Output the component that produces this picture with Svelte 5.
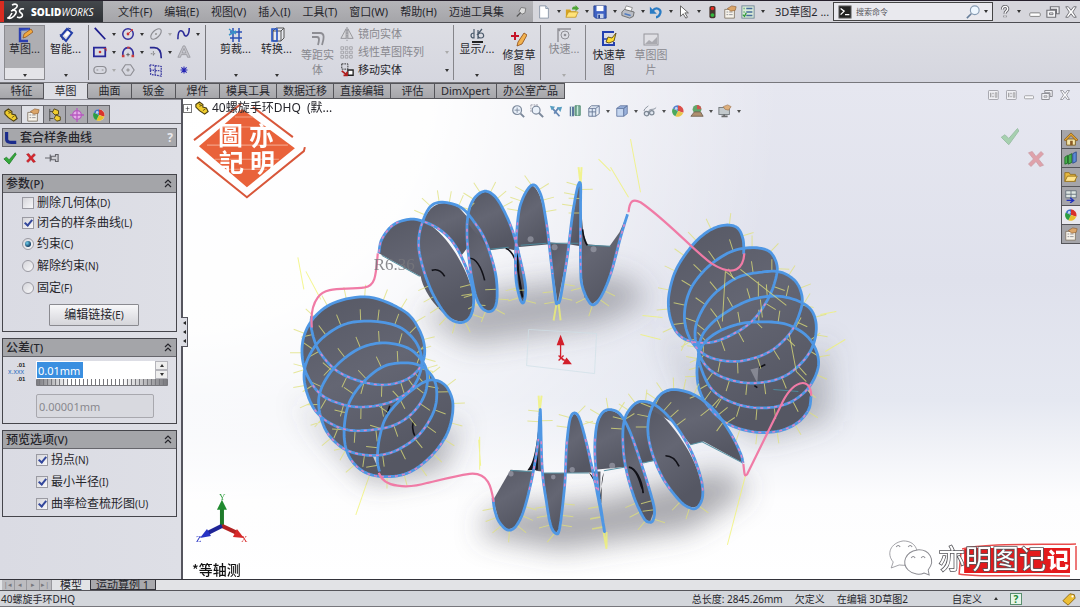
<script>
  const menus = ['文件(F)', '编辑(E)', '视图(V)', '插入(I)', '工具(T)', '窗口(W)', '帮助(H)', '迈迪工具集'];
  const tabs = ['特征', '草图', '曲面', '钣金', '焊件', '模具工具', '数据迁移', '直接编辑', '评估', 'DimXpert', '办公室产品'];
  const quick = [
    ['new', '新建', 1], ['open', '打开', 1], ['save', '保存', 1], ['print', '打印', 1], ['undo', '撤销', 1],
    ['cursor', '选择', 1], ['light', '重建', 0], ['props', '属性', 0], ['list', '选项', 1]
  ];
  const tools = [
    ['line', '直线', 1], ['circle', '圆', 1], ['ellipse', '椭圆', 2], ['spline', '样条曲线', 1],
    ['rect', '矩形', 1], ['arc', '圆弧', 1], ['fillet', '圆角', 1], ['text', '文字', 0],
    ['slot', '槽口', 2], ['poly', '多边形', 0], ['plane', '基准面', 0], ['point', '点', 0]
  ];
  const heads = [
    ['zoomfit', '整屏显示', 0], ['zoomarea', '局部放大', 0], ['prev', '上一视图', 0], ['section', '剖面视图', 0],
    ['orient', '视图定向', 1], ['cube', '显示样式', 1], ['glasses', '隐藏/显示', 1],
    ['ball', '外观', 0], ['scene', '布景', 1], ['monitor', '视图设定', 1]
  ];
  const side = [['home', '资源'], ['library', '设计库'], ['folder', '文件探索器'], ['palette', '视图调色板'], ['ball', '外观'], ['props', '自定义属性']];
  const managers = [['part', '设计树'], ['props', '属性'], ['config', '配置'], ['target', '尺寸'], ['ball', '显示']];

  const icons = {
    new: '<path d="M3 1h7l3 3v11H3z" fill="#fff" stroke="#8793a5"/><path d="M10 1v3h3" fill="#cbd7e8" stroke="#8793a5"/>',
    open: '<path d="M1 5h5l1 2h6v7H1z" fill="#d6a321"/><path d="M1 14l3-6h11l-3 6z" fill="#ffe37a" stroke="#b88a1c" stroke-width=".7"/><path d="M8 5c0-3 2-4 4-3V0l4 4-4 3V5z" fill="#4ea535"/>',
    save: '<path d="M1 1h14v14H3l-2-2z" fill="#3f62c4" stroke="#25408c"/><path d="M4 1h8v6H4z" fill="#fff"/><path d="M5 10h7v5H5z" fill="#c9d4ea"/><path d="M6 11h2v4H6z" fill="#25408c"/>',
    print: '<path d="M4 6l2-5 7 2-2 5z" fill="#fff" stroke="#888"/><path d="M1 8l3-3 11 3-1 5-4 2-9-3z" fill="#b9bcc4" stroke="#666"/><path d="M4 10l7 2" stroke="#507bc0" stroke-width="1.5"/>',
    undo: '<path d="M4 7c4-6 10-2 9 2-1 3-3 5-5 5" fill="none" stroke="#2b7cc4" stroke-width="2.6"/><path d="M1 2v8h8z" fill="#2b7cc4"/>',
    cursor: '<path d="M4 1v12l3-3 3 5 2-1-3-5h4z" fill="#fff" stroke="#555"/>',
    light: '<rect x="5" y="1" width="7" height="14" rx="2" fill="#45362f"/><circle cx="8.500" cy="4" r="2" fill="#e22b22"/><circle cx="8.500" cy="11.500" r="2.200" fill="#35b93f"/>',
    props: '<path d="M2 5h11v10H2z" fill="#f7f3ea" stroke="#847869"/><path d="M4 8h2M4 11h2M7 8h4M7 11h4" stroke="#8a8a90"/><path d="M5 4l5-3 5 1-1 4-5 1z" fill="#dba568" stroke="#8d5c2e" stroke-width=".7"/>',
    list: '<rect x="1" y="1" width="14" height="14" fill="#d9ead8" stroke="#6d8495"/><path d="M6 4h7M6 8h7M6 12h7" stroke="#456c9b" stroke-width="1.500"/><path d="M3 4h1M3 8h1M2 11l2 2 2-4" stroke="#2e9a3a" fill="none" stroke-width="1.500"/>',
    sketch: '<path d="M13 2H3v12h8" fill="none" stroke="#2c3fb0" stroke-width="2.400"/><path d="M3 5c2-3 5-1 9-3" fill="none" stroke="#4464cf"/><path d="M6 11l1-4 7-5 2 3-7 5z" fill="#f2a93d" stroke="#8a4c1b" stroke-width=".7"/>',
    dimension: '<path d="M3 9l6-7 5 4-6 8z" fill="none" stroke="#243fa8" stroke-width="2"/><path d="M6 8l4-4 2 2-4 4z" fill="#fff"/><path d="M2 7l3 6M10 1l3 1" stroke="#2b3f93"/>',
    line: '<path d="M2 1l12 13" stroke="#1d1d8e" stroke-width="2"/>',
    circle: '<circle cx="8" cy="8" r="6" fill="none" stroke="#33309c" stroke-width="1.700"/><path d="M8 8l4-4" stroke="#c33"/><circle cx="8" cy="8" r="1.600" fill="#c33"/><circle cx="12.500" cy="3.500" r="1.200" fill="#c33"/>',
    ellipse: '<ellipse cx="8" cy="8" rx="7.500" ry="4" transform="rotate(-45 8 8)" fill="none" stroke="#8d8d93" stroke-width="1.300"/><circle cx="8" cy="8" r="1.200" fill="#999"/>',
    spline: '<path d="M1 14C1 0 7 4 8 8s6 3 6-7" fill="none" stroke="#2a2a98" stroke-width="1.800"/>',
    rect: '<rect x="1" y="3" width="13" height="10" fill="none" stroke="#28289a" stroke-width="2"/><circle cx="8" cy="8" r="1.500" fill="#c33"/><path d="M12 4h3v3" stroke="#c33" fill="none"/>',
    arc: '<path d="M2 12C1 0 15 0 14 12" fill="none" stroke="#33309c" stroke-width="1.800"/><path d="M8 9v4M6 11h4" stroke="#555"/><path d="M1 11h3v3H1zM12 11h3v3h-3zM7 2h3v2H7z" fill="#cc3c3c"/>',
    fillet: '<path d="M1 3h5c5 0 8 3 8 12" fill="none" stroke="#26268f" stroke-width="1.900"/><path d="M5 7v6M2 10h6" stroke="#777" stroke-dasharray="2 1"/>',
    text: '<path d="M1 14L7 1h2l6 13h-3l-1-3H5l-1 3zM6 9h4L8 4z" fill="#c3c3c9" stroke="#8f8f96" stroke-width=".8"/>',
    slot: '<rect x="1" y="4" width="14" height="8" rx="4" fill="none" stroke="#8d8d93" stroke-width="1.400"/><path d="M4 8h2M10 8h2" stroke="#888"/>',
    poly: '<path d="M5 2h6l4 6-4 6H5L1 8z" fill="none" stroke="#8d8d93" stroke-width="1.300"/><path d="M8 6v4M6 8h4" stroke="#888"/>',
    plane: '<path d="M1 2l13 2v11L2 13zM1 8l13 1M7 3v11" fill="none" stroke="#3a3aa0" stroke-width="1.400" stroke-dasharray="2 1"/>',
    point: '<path d="M8 4v8M4 8h8M5 5l6 6M11 5l-6 6" stroke="#2525b4" stroke-width="1.200"/>',
    trim: '<path d="M2 5h12M2 11h12M5 1v14M11 1v14" stroke="#2b50b6" stroke-width="1.500"/><path d="M1 2l7 5M1 8l7-4" stroke="#3794c8" stroke-width="1.500"/>',
    convert: '<path d="M4 4l3-3h8v10l-3 3H4z" fill="#e8eaf0" stroke="#555"/><path d="M4 4h8v10M12 4l3-3" fill="none" stroke="#555"/><path d="M3 2h5v12H3z" fill="none" stroke="#2554c4" stroke-width="1.600"/>',
    offset: '<path d="M2 2h8c5 0 4 6 2 12M2 6h5c3 0 2 4 1 8" fill="none" stroke="#8d8d93" stroke-width="1.800"/>',
    mirror: '<path d="M7 2L1 13h6zM9 2l6 11H9z" fill="#d8d8dc" stroke="#909095"/><path d="M8 0v16" stroke="#88888e" stroke-dasharray="2 1"/>',
    pattern: '<path d="M1 2h3v3H1zM6 2h3v3H6zM11 2h3v3h-3zM1 7h3v3H1zM6 7h3v3H6zM11 7h3v3h-3zM1 12h3v3H1zM6 12h3v3H6zM11 12h3v3h-3z" fill="none" stroke="#a0a0a6"/>',
    move: '<path d="M2 1h7v6H2z" fill="none" stroke="#222" stroke-dasharray="2 1"/><path d="M9 8h6v6H9z" fill="#fff" stroke="#222" stroke-width="1.500"/><path d="M2 9l5 4M4 14h4v-4" stroke="#b11d1d" stroke-width="2" fill="none"/>',
    display: '<path d="M5 6c-4 0-4 5 0 5V2M9 3v9M12 6c-4 0-4 5 0 5s3-5 0-5M8 8l5-6" stroke="#4b5b6c" stroke-width="1.200" fill="none"/><path d="M3 15h11" stroke="#222" stroke-width="2"/>',
    repair: '<path d="M4 1v8M0 5h8" stroke="#c5162a" stroke-width="2"/><path d="M7 11l6-9 3 2-5 9-5 2z" fill="#f2b24f" stroke="#8c4a13" stroke-width=".8"/>',
    snap: '<path d="M2 15V2h13M2 2l2 2" fill="none" stroke="#909096" stroke-width="1.400"/><circle cx="9" cy="8" r="4" fill="none" stroke="#909096"/><circle cx="9" cy="8" r="1.300" fill="#909096"/>',
    rapid: '<path d="M13 1H2v13h11v-3" fill="none" stroke="#2340b0" stroke-width="2"/><path d="M2 8h9" stroke="#2340b0" stroke-width="1.500"/><path d="M5 11l2-5 4 1 4-5-2 8-5 2z" fill="#ffdd31" stroke="#5b4a10" stroke-width=".9"/>',
    image: '<rect x="1" y="3" width="14" height="11" fill="#dfdfe4" stroke="#96969c"/><path d="M2 13l4-4 3 2 5-5v7z" fill="#aaaab0"/>',
    pin: '<path d="M7 2l6 1-1 6-4 2-4-4z" fill="#ddd" stroke="#666"/><path d="M6 9l-5 5" stroke="#555" stroke-width="1.500"/>',
    help: '<path d="M5 5c0-5 7-4 6 0-.5 2-3 2-3 5M8 12v2" fill="none" stroke="#66666c" stroke-width="3.500"/><path d="M5 5c0-5 7-4 6 0-.5 2-3 2-3 5M8 12v2" fill="none" stroke="#fff" stroke-width="1.500"/>',
    min: '<rect x="2" y="9" width="12" height="4" rx="1" fill="#fff" stroke="#777"/>',
    restore: '<path d="M5 2h10v8h-3V5H5zM1 6h10v8H1z" fill="#f5f5f7" stroke="#707076" stroke-width="1.300"/><path d="M4 9h4v2H4z" fill="#eee" stroke="#707076"/>',
    close: '<path d="M2 2h3l3 4 3-4h3l-4 6 4 6h-3l-3-4-3 4H2l4-6z" fill="#fff" stroke="#707076" stroke-width="1.100"/>',
    pane: '<rect x="2" y="2" width="13" height="12" rx="1" fill="#f3f3f6" stroke="#77777c"/><path d="M5 5v6M8 5v2M8 9v2" stroke="#777" stroke-width="1.500"/><path d="M11 5h2v6h-2z" fill="none" stroke="#777"/>',
    term: '<rect x="1" y="1" width="14" height="14" fill="#222" stroke="#777"/><path d="M3 4l4 3-4 4M8 11h5" fill="none" stroke="#fff" stroke-width="1.500"/>',
    search: '<circle cx="10" cy="6" r="5" fill="#eef7ff" stroke="#879cb3" stroke-width="1.300"/><path d="M6 10l-5 5" stroke="#667d99" stroke-width="1.800"/>',
    part: '<path d="M1 4l4-3 4 3v3l4 1 2 4-4 3-6-4-4-4z" fill="#f0cd2d" stroke="#4b3f12" stroke-width="1.300"/><path d="M5 6l3-1M9 11l3-2M4 3l3 2" stroke="#5d4d13"/>',
    config: '<path d="M2 1v14M2 4h4M2 12h4" stroke="#444" fill="none"/><path d="M7 1l5 2v4l-4 1-3-3zM9 8l5 2v4l-4 1-3-3z" fill="#f0cd2d" stroke="#4b3f12"/>',
    target: '<circle cx="8" cy="8" r="5" fill="#e5aee8" stroke="#b65bc0" stroke-width="1.500"/><path d="M8 0v16M0 8h16" stroke="#b65bc0" stroke-width="1.500"/>',
    ball: '<circle cx="8" cy="8" r="6.500" fill="#fff"/><path d="M8 8V1.500A6.500 6.500 0 0114 10z" fill="#d8332c"/><path d="M8 8l6 2a6.500 6.500 0 01-9 4z" fill="#e7bf2e"/><path d="M8 8l-3 6A6.500 6.500 0 012 5z" fill="#2e9d43"/><path d="M8 8L2 5a6.500 6.500 0 016-3.500z" fill="#3d6fc6"/><circle cx="6" cy="5" r="1.500" fill="#fff" opacity=".7"/>',
    zoomfit: '<circle cx="7" cy="7" r="5" fill="#e8f0fa" stroke="#66758a" stroke-width="1.400"/><path d="M11 11l4 4" stroke="#66758a" stroke-width="2.200"/><path d="M7 4v6M4 7h6" stroke="#66758a"/>',
    zoomarea: '<circle cx="7" cy="7" r="4.500" fill="#e8f0fa" stroke="#66758a" stroke-width="1.400"/><path d="M10 10l5 5" stroke="#66758a" stroke-width="2.200"/><path d="M1 1h9M1 1v9" stroke="#889" stroke-dasharray="2 1"/>',
    prev: '<path d="M4 5l8 9M11 4l-5 7" stroke="#4c74a8" stroke-width="2"/><path d="M1 2l6 1-4 4zM15 3l-2 6-4-5z" fill="#3d8fb8"/>',
    section: '<path d="M2 3h5v11H2z" fill="#44628f"/><path d="M8 2h6v11H8z" fill="#68a28c" stroke="#375"/><path d="M4 3v11M11 2v11" stroke="#dfe"/>',
    orient: '<path d="M2 5h8v9H2zM5 2h9v9" fill="#dce6f5" stroke="#4c5f80"/><path d="M2 9h8M6 5v9M5 2l-3 3M14 2l-4 3M14 11l-4 3" stroke="#4c5f80"/>',
    cube: '<path d="M2 5h8v9H2z" fill="#bcd0ee" stroke="#4f6796"/><path d="M2 5l4-3h8l-4 3zM10 5l4-3v9l-4 3z" fill="#8aa6d6" stroke="#4f6796"/>',
    glasses: '<path d="M1 8c1-4 4-4 5-6M6 9c2-5 6-1 9-5" stroke="#6a7684" fill="none"/><circle cx="4" cy="11" r="2.500" fill="#dde4ee" stroke="#6a7684" stroke-width="1.400"/><circle cx="10" cy="10" r="2.500" fill="#dde4ee" stroke="#6a7684" stroke-width="1.400"/>',
    scene: '<circle cx="8" cy="6" r="5" fill="#4a9a51"/><path d="M8 1a5 5 0 015 5H8z" fill="#c93b34"/><path d="M1 14l4-5h7l3 5z" fill="#a57f56" stroke="#5b4a38"/>',
    monitor: '<rect x="1" y="4" width="12" height="8" fill="#bcc4c6" stroke="#5b6164"/><path d="M4 14h7M7 12v2" stroke="#555" stroke-width="2"/><path d="M6 3l5-2 4 2-3 4-4-1z" fill="#dba568" stroke="#8d5c2e" stroke-width=".7"/>',
    home: '<path d="M3 8h10v7H3z" fill="#f5e7ab" stroke="#7b5b20"/><path d="M0 9l8-8 8 8-2 1-6-6-6 6z" fill="#e5a52d" stroke="#7b4f13" stroke-width=".8"/><path d="M7 10h3v5H7z" fill="#8a5a24"/>',
    library: '<path d="M1 7l3-2v9l-3 1zM5 5l4-2v10l-4 2z" fill="#46b04a" stroke="#1f6d28"/><path d="M10 3l4-2v11l-4 2z" fill="#5b8ad6" stroke="#2a4a8c"/>',
    folder: '<path d="M1 3h5l1 2h6v8H1z" fill="#e8b93d" stroke="#94701f"/><path d="M1 13l3-6h11l-3 6z" fill="#ffe48c" stroke="#94701f"/>',
    palette: '<path d="M2 2h12v8H2z" fill="#dde6e2" stroke="#63707a"/><path d="M8 2v8M2 6h12" stroke="#63707a"/><path d="M3 13h7M7 10l4 3-4 3" stroke="#1d2fc0" stroke-width="1.500" fill="none"/>',
    curve: '<path d="M3 1v8c0 4 3 4 11 4" fill="none" stroke="#1b2c8c" stroke-width="3.600"/>',
    ok: '<path d="M1 9l3-2 3 3 7-8 1 2-8 11z" fill="#35a83b" stroke="#1c7a26" stroke-width=".8"/>',
    cancel: '<path d="M2 3l3-1 3 4 4-4 2 2-4 4 4 5-3 1-3-4-4 4-2-2 4-4z" fill="#d8252c" stroke="#9a161c" stroke-width=".6"/>',
    push: '<path d="M0 8h6M6 4v8M7 6h5V4h3v8h-3v-2H7z" fill="#cfcfd4" stroke="#66666c" stroke-width="1.300"/>',
    tag: '<path d="M1 10l8-8 5 1 1 4-8 8z" fill="#edbf35" stroke="#8a6512"/><circle cx="12" cy="5" r="1.300" fill="#fff"/>'
  };

  const left = [[62,440],[62,480],[85,545],[140,605],[220,638],[290,645],[350,628],[390,590],[402,540],[385,480],[340,425],[235,383],[130,400],[65,450],[35,520],[42,600],[85,670],[150,703],[220,712],[300,697],[360,660],[388,610],[392,560],[370,510],[320,470],[240,455],[160,465],[90,510],[50,570],[40,630],[60,700],[95,745],[150,775],[210,783],[300,770],[360,735],[400,680],[410,620],[395,575],[350,535],[275,520],[200,540],[130,595],[90,660],[85,720],[110,790],[165,840],[240,857],[310,845],[380,800],[425,735],[438,680],[430,630],[395,592],[345,580],[280,590],[220,635],[175,700],[160,780],[170,850],[210,900],[270,920],[350,910],[420,860],[470,790],[487,710],[470,655],[435,632],[395,640],[330,690],[285,745],[265,810],[260,870],[266,905]];
  const right = [[310,165],[308,120],[290,85],[250,78],[200,98],[150,145],[105,215],[85,290],[88,350],[110,400],[150,425],[215,428],[285,400],[340,360],[385,295],[408,230],[408,190],[385,155],[335,145],[270,158],[200,205],[150,270],[132,345],[145,410],[185,460],[240,482],[310,483],[390,455],[450,400],[480,335],[485,290],[465,245],[420,218],[365,218],[290,235],[215,290],[172,360],[165,420],[190,490],[240,530],[320,550],[400,542],[460,512],[510,455],[528,390],[515,335],[470,303],[400,290],[320,305],[240,350],[190,400],[175,450],[180,500],[215,570],[280,610],[360,625],[440,612],[500,570],[532,510],[530,460],[500,410],[440,375],[365,367],[290,375],[220,405],[180,450],[170,530],[190,600],[250,665],[330,695],[410,695],[470,670],[505,630],[512,590]];
  const top = [[378,254],[381,240],[392,226],[408,220],[422,222],[440,231],[455,247],[468,275],[473,300],[469,318],[458,323],[445,315],[430,290],[420,260],[418,240],[422,222],[430,207],[442,203],[460,208],[473,222],[485,242],[495,275],[496,302],[490,312],[480,307],[473,288],[467,248],[467,218],[473,200],[484,192],[495,198],[505,215],[513,235],[520,262],[525,288],[523,303],[519,298],[515,275],[516,235],[520,205],[531,186],[540,195],[546,225],[550,258],[555,300],[557,303],[560,298],[567,255],[572,215],[577,188],[580,185],[580,208],[580,265],[582,288],[591,305],[600,298],[610,275],[620,238],[627,215]];
  const bottom = [[97,385],[102,420],[115,455],[140,480],[165,470],[190,420],[215,320],[232,220],[238,130],[240,140],[245,300],[258,400],[270,465],[285,490],[297,475],[312,350],[318,230],[328,150],[342,130],[358,150],[380,230],[400,320],[420,420],[432,485],[425,440],[412,350],[403,250],[408,170],[425,130],[450,120],[480,135],[510,190],[545,290],[570,370],[582,420],[578,450],[568,457],[550,445],[520,380],[495,290],[487,210],[492,150],[515,110],[545,95],[590,110],[640,160],[690,240],[720,320],[727,375],[715,408],[695,416],[660,395],[610,330],[575,250],[562,180],[572,120],[600,75],[640,60],[700,75],[760,120],[810,190],[840,250],[848,280]];

  // Samples a Catmull-Rom spline through the given points.
  function sample(pts, steps = 8) {
    const out = [];
    for (let i = 0; i < pts.length - 1; i++) {
      const a = pts[Math.max(0, i - 1)], b = pts[i], c = pts[i + 1], d = pts[Math.min(pts.length - 1, i + 2)];
      for (let s = 0; s < steps; s++) {
        const t = s / steps;
        out.push([0, 1].map((k) => 0.5 * (2 * b[k] + (c[k] - a[k]) * t + (2 * a[k] - 5 * b[k] + 4 * c[k] - d[k]) * t * t + (3 * b[k] - a[k] - 3 * c[k] + d[k]) * t * t * t)));
      }
    }
    out.push(pts[pts.length - 1]);
    return out;
  }
  const fmt = (p) => p[0].toFixed(1) + ' ' + p[1].toFixed(1);
  const place = (pts, x, y) => pts.map((p) => [x + p[0] / 3, y + p[1] / 3]);

  // Curve, its curvature comb and the stretches that carry inflection marks.
  function build(pts, axis) {
    const s = sample(pts);
    let comb = '', marks = '', run = 0, pen = false;
    for (let i = 1; i < s.length; i++) {
      const dx = s[i][0] - s[i - 1][0], dy = s[i][1] - s[i - 1][1], len = Math.hypot(dx, dy) || 1;
      run += len;
      let nx = -dy / len, ny = dx / len;
      if (axis && ny * (s[i][1] - axis) < 0) { nx = -nx; ny = -ny; }
      const far = !axis || Math.abs(s[i][1] - axis) > 34;
      if (run > (axis ? 9 : 17)) {
        run = 0;
        if (far) comb += 'M' + fmt(s[i]) + 'l' + fmt([nx * 12, ny * 12]);
      }
      const on = axis ? Math.abs(s[i][1] - axis) < 28 : dx / len > 0.5;
      if (on) marks += (pen ? 'L' : 'M') + fmt(s[i]);
      pen = on;
    }
    return { d: 'M' + s.map(fmt).join('L'), comb, marks };
  }
  const curves = [
    build(place(left, 290, 170)), build(place(right, 640, 200)), build(top, 250), build(place(bottom, 460, 370), 464)
  ];
  const smooth = (pts) => 'M' + sample(pts, 6).map(fmt).join('L') + 'Z';
  const topFaces = [
    'M378 254C380 225 405 214 424 223C451 234 484 298 470 318C454 333 424 299 420 277Z',
    'M418 240C423 207 438 197 458 208L467 218V248L461 256L455 247L440 231L422 222Z',
    smooth([[467,222],[485,242],[495,275],[496,302],[490,312],[480,307],[473,288],[467,248]]),
    'M467 218C475 188 489 182 503 210L516 240L514 251L505 249L489 251L467 224Z',
    'M516 248L520 262L525 290L523 303L519 298L515 275Z',
    'M516 248C516 220 522 187 531 186C542 190 545 222 549 245Z',
    'M548 243L569 245L557 303Z',
    'M568 245L577 188L580 185V247Z',
    'M580 205L583 235L587 245L609 247L619 233L627 215L620 238L610 275L600 298L591 305L584 298L581 275Z'
  ];
  const bottomFaces = [
    'M98 390L150 300L220 305L190 420L165 470L140 480L115 455Z',
    'M225 303L232 220L238 130L243 305Z',
    'M247 310H315L297 475L285 490L270 465Z',
    'M312 310L328 150L342 130L358 150L380 230L400 308Z',
    'M400 305L418 400L420 305Z',
    'M403 300L408 170L425 130L450 120L480 135L510 190L540 285L490 292Z',
    'M487 200L495 290L520 380L550 445L568 457L582 420L570 370L545 290L510 190L494 160Z',
    'M492 150L515 110L545 95L590 110L600 270L545 280L510 190Z',
    'M572 120C562 210 570 260 610 330C650 400 695 430 720 400C742 350 692 210 572 105Z',
    'M572 120C580 72 630 46 700 75C770 108 840 220 848 280L730 215L690 225L640 160Z'
  ];
</script>

{#snippet icon(name, size = 14)}
  <svg class="icon" width={size} height={size} viewBox="0 0 16 16" aria-hidden="true">{@html icons[name]}</svg>
{/snippet}

{#snippet big(name, label, cls = '', arrow = true)}
  <button class="big {cls}">
    {@render icon(name, 16)}
    <span class="cap">{label}</span>
    {#if arrow}<i class="arrow"></i>{/if}
  </button>
{/snippet}

{#snippet check(label, key, on)}
  <label class="opt"><input type="checkbox" checked={on} /><span>{label}<small>({key})</small></span></label>
{/snippet}

{#snippet radio(label, key, on)}
  <label class="opt"><input type="radio" name="mode" checked={on} /><span>{label}<small>({key})</small></span></label>
{/snippet}

{#snippet fold()}
  <svg class="fold" width="8" height="9" viewBox="0 0 8 9" aria-hidden="true"><path d="M1 4l3-3 3 3M1 8l3-3 3 3" fill="none" stroke="#26262c" stroke-width="1.200" /></svg>
{/snippet}

<div class="app">
  <header class="titlebar">
    <div class="brand">
      <svg width="20" height="18" viewBox="0 0 20 18" aria-hidden="true">
        <path d="M5 2c4-2 7 0 4 3C8 6 6 7 5 7M4 8c5-2 7 1 3 5-2 2-4 3-6 2 2-1 3-3 4-5M17 6c-4-1-6 2-3 4s1 6-4 4" fill="none" stroke="#fff" stroke-width="1.600" />
      </svg>
      <b>SOLID<em>WORKS</em></b>
    </div>
    <nav class="menus">
      {#each menus as m}<button>{m}</button>{/each}
      {@render icon('pin', 12)}
    </nav>
    <div class="quick">
      {#each quick as [name, label, arrow]}
        <button aria-label={label}>{@render icon(name)}{#if arrow}<i class="arrow"></i>{/if}</button>
      {/each}
    </div>
    <span class="doc">3D草图2 ...</span>
    <div class="search">
      {@render icon('term')}
      <input aria-label="搜索命令" placeholder="搜索命令" />
      {@render icon('search')}
      <i class="arrow"></i>
    </div>
    <div class="winctl">
      <button aria-label="帮助">{@render icon('help')}<i class="arrow"></i></button>
      {#each [['min', '最小化'], ['restore', '还原'], ['close', '关闭']] as [n, l]}
        <button aria-label={l}>{@render icon(n)}</button>
      {/each}
    </div>
  </header>

  <section class="ribbon">
    {@render big('sketch', '草图...', 'active')}
    {@render big('dimension', '智能...')}
    <div class="tools">
      {#each tools as [name, label, arrow]}
        <button aria-label={label}>{@render icon(name)}{#if arrow}<i class="arrow" class:dim={arrow === 2}></i>{/if}</button>
      {/each}
    </div>
    <div class="group first">
      {@render big('trim', '剪裁...')}
      {@render big('convert', '转换...')}
      {@render big('offset', '等距实体', 'tall dim', false)}
      <div class="rows">
        <button class="dim">{@render icon('mirror')}镜向实体</button>
        <button class="dim">{@render icon('pattern')}线性草图阵列<i class="arrow"></i></button>
        <button>{@render icon('move')}移动实体<i class="arrow"></i></button>
      </div>
    </div>
    <div class="group">
      {@render big('display', '显示/...')}
      {@render big('repair', '修复草图', 'tall', false)}
    </div>
    <div class="group">{@render big('snap', '快速...', 'dim')}</div>
    <div class="group">
      {@render big('rapid', '快速草图', 'tall', false)}
      {@render big('image', '草图图片', 'tall dim', false)}
    </div>
  </section>

  <main class="work">
    <nav class="tabs">
      {#each tabs as t, i}<button class:on={i === 1} class:long={t.length > 3}>{t}</button>{/each}
    </nav>

    <aside class="panel">
      <div class="managers">
        {#each managers as [name, label], i}
          <button class:on={i === 1} aria-label={label}>{@render icon(name)}</button>
        {/each}
      </div>
      <h1>{@render icon('curve')}<span>套合样条曲线</span><button aria-label="帮助" class="q">?</button></h1>
      <div class="confirm">
        <button aria-label="确定">{@render icon('ok')}</button>
        <button aria-label="取消">{@render icon('cancel', 12)}</button>
        <button aria-label="保持可见">{@render icon('push')}</button>
      </div>

      <section class="box">
        <h2><span>参数<small>(P)</small></span>{@render fold()}</h2>
        <div class="body params">
          {@render check('删除几何体', 'D', false)}
          {@render check('闭合的样条曲线', 'L', true)}
          {@render radio('约束', 'C', true)}
          {@render radio('解除约束', 'N', false)}
          {@render radio('固定', 'F', false)}
          <button class="push">编辑链接<small>(E)</small></button>
        </div>
      </section>

      <section class="box">
        <h2><span>公差<small>(T)</small></span>{@render fold()}</h2>
        <div class="body tol">
          <svg width="20" height="20" viewBox="0 0 20 20" aria-hidden="true">
            <text x="0" y="12" class="xxx">x.xxx</text><text x="9" y="5" class="pm">.01</text><text x="9" y="19" class="pm">.01</text>
          </svg>
          <div class="fields">
            <div class="spin">
              <div class="entry"><input aria-label="公差" value="0.01mm" /></div>
              <div class="updown"><button aria-label="增加"><i class="arrow up"></i></button><button aria-label="减少"><i class="arrow"></i></button></div>
            </div>
            <div class="wheel"></div>
            <input class="actual" aria-label="实际公差" value="0.00001mm" disabled />
          </div>
        </div>
      </section>

      <section class="box">
        <h2><span>预览选项<small>(V)</small></span>{@render fold()}</h2>
        <div class="body preview">
          {@render check('拐点', 'N', true)}
          {@render check('最小半径', 'I', true)}
          {@render check('曲率检查梳形图', 'U', true)}
        </div>
      </section>
      <button class="grip" aria-label="折叠面板"><i></i><i></i><i></i></button>
    </aside>

    <div class="view">
      <svg class="scene" viewBox="182 84 898 495" preserveAspectRatio="none" aria-hidden="true">
        <defs>
          <linearGradient id="bg" x1="0" y1="0" x2="0" y2="1">
            <stop offset="0" stop-color="#e6e7f0" /><stop offset=".4" stop-color="#dfe1ec" />
            <stop offset=".64" stop-color="#e5e8f1" /><stop offset=".84" stop-color="#fdfdfe" /><stop offset="1" stop-color="#fff" />
          </linearGradient>
          <radialGradient id="glow" gradientUnits="userSpaceOnUse" cx="180" cy="80" r="600">
            <stop offset="0" stop-color="#fff" /><stop offset=".42" stop-color="#fff" stop-opacity=".96" /><stop offset="1" stop-color="#fff" stop-opacity="0" />
          </radialGradient>
          <linearGradient id="steel" x1="0" y1="0" x2=".4" y2="1">
            <stop offset="0" stop-color="#565864" /><stop offset=".5" stop-color="#646673" /><stop offset="1" stop-color="#555763" />
          </linearGradient>
          <filter id="soft" x="-30%" y="-30%" width="160%" height="160%"><feGaussianBlur stdDeviation="14" /></filter>
        </defs>
        <rect x="182" y="84" width="898" height="495" fill="url(#bg)" />
        <rect x="182" y="84" width="898" height="495" fill="url(#glow)" />
        <g filter="url(#soft)" fill="#55555f">
          <path d="M420 315L500 290L620 275L650 300L600 325L470 345Z" opacity=".42" />
          <path d="M295 400L330 440L370 482L440 470L460 420L380 460Z" opacity=".5" />
          <path d="M490 510L600 500L720 470L750 490L690 530L560 550L480 535Z" opacity=".5" />
          <path d="M660 320L690 390L760 440L830 420L825 340L780 400L700 380Z" opacity=".36" />
        </g>

        <g class="comb faint">
          <path d="M305 272L320 300M297 258L303 290M630 140L640 193M610 168L628 198M479 437V470M745 476L727 545M610 172L598 160M660 340L640 335M662 318L642 316M845 340L825 352M820 315L836 312M388 465L382 475M365 486L355 515M480 466L478 440" />
          <path d="M578 168L580 185M581 168L580 185M556 304L553 321M558 304L560 321M538 396L539 412M541 396L539 412M603 532L606 549M606 532L606 547" stroke-width="2" />
        </g>

        <g fill="url(#steel)">
          <path d={curves[0].d} /><path d={curves[1].d} />
          {#each topFaces as d}<path {d} />{/each}
        </g>
        <g transform="translate(460 370) scale(.3333)" fill="url(#steel)">
          {#each bottomFaces as d}<path {d} />{/each}
          <path d="M200 302C222 280 228 220 234 170L232 300ZM385 308C405 320 410 360 415 400L430 308C420 330 425 360 422 400L410 350ZM505 292C530 300 540 330 550 372L540 350C530 315 520 300 505 292Z" fill="#15151b" />
          <path d="M615 258C635 258 648 272 656 290M505 292C525 295 545 330 548 370" fill="none" stroke="#111118" stroke-width="5" />
          <path d="M150 302L220 306M250 310H385M430 303L495 292M548 280L580 272M690 225L725 216L848 280" fill="none" stroke="#5893a5" stroke-width="3" />
          <circle cx="151" cy="312" r="8" fill="#a6a8b5" opacity=".6" /><circle cx="278" cy="322" r="7" fill="#a6a8b5" opacity=".6" /><circle cx="335" cy="300" r="8" fill="#a6a8b5" opacity=".6" /><circle cx="455" cy="288" r="9" fill="#a6a8b5" opacity=".6" />
        </g>
        <path d="M431 271C437 269 441 272 444 277M468 259C475 258 481 268 484 281M505 249C513 252 516 262 519 280L522 298C517 285 518 262 516 250M582 230C583 238 584 243 587 246M413 422C411 425 412 432 414 436M389 406L386 415M759 368L765 365M754 386L757 388" fill="none" stroke="#111118" stroke-width="1.600" />
        <path d="M381 256L419 277M489 250L508 248M520 246L546 244M550 244H578M587 246L610 247M773 390L798 392M392 452L415 440" fill="none" stroke="#4f8a9c" />
        <g fill="#a9abb7" opacity=".55"><circle cx="530" cy="240" r="3" /><circle cx="554" cy="248" r="3" /><circle cx="593" cy="250" r="3" /><path d="M750 370L758 368L757 384L753 376Z" /></g>

        {#each curves as c}
          <path d={c.comb} class="comb" />
          <path d={c.d} class="curve" />
          <path d={c.marks} class="marks" />
        {/each}
        <path class="comb" d="M725 272L722 322M725 272L735 280M740 270L786 306M789 335L796 372L806 382M758 282V297M762 318L760 300" />
        <path class="link" d="M377 254C375 276 375 286 364 288C345 291 325 286 317 298C311 306 310 318 311 328M628 213C629 202 632 199 640 203C665 220 690 248 711 264C735 279 743 268 744 254M378 473C383 488 407 489 427 483C443 479 455 476 469 474C489 472 491 490 493 502M743 464C744 474 744 478 747 474L780 407C792 380 810 376 811 396" />
        <text x="373" y="271" class="dimtext">R6.36</text>

        <g stroke="#d21f2b" fill="#d21f2b" stroke-width="1.300">
          <path d="M560 358V345M560 358L566 362" /><path d="M560 337L563 345H557ZM570 364L563 364L566 359Z" /><path d="M558 356L563 361M563 356L558 361" />
        </g>
        <path d="M528 330L596 334L594 374L526 366Z" fill="none" stroke="#cfe0e6" stroke-width=".7" />

        <g>
          <path d="M221 526V508" stroke="#1f7a2b" stroke-width="4" /><path d="M221 500L226 510H216Z" fill="#1f8a2f" />
          <path d="M221 526L236 533" stroke="#b32222" stroke-width="4" /><path d="M243 538L232 537L236 529Z" fill="#d62828" />
          <path d="M221 526L207 533" stroke="#1e2396" stroke-width="4" /><path d="M199 538L206 529L210 536Z" fill="#2733c4" />
          <text x="218" y="500" class="ax" fill="#2d9c3c">Y</text><text x="240" y="542" class="ax" fill="#d62828">X</text><text x="195" y="542" class="ax" fill="#2733c4">Z</text>
        </g>
        <text x="191" y="575" class="iso">*等轴测</text>

        <g class="seal">
          <path d="M241 110L294 149L246 188L198 147Z" fill="#e9623a" />
          <path d="M193 141L240 105M252 108L292 138M196 158L246 198L303 152L304 148" fill="none" stroke="#d8573a" stroke-width="2" />
          <path d="M206 146H287M214 160H278M226 170H266M222 128H264M234 118H252" stroke="#f3a084" />
          <text x="217" y="146">圖</text><text x="248" y="146">亦</text><text x="218" y="173">記</text><text x="249" y="173">明</text>
        </g>

        <g fill="#fff" stroke="#8c8c92">
          <path d="M903 541C890 543 886 554 893 562L891 568L899 565C912 567 919 560 917 551C915 544 910 541 903 541Z" stroke-width=".8" />
          <path d="M917 550C905 552 901 563 908 570C913 575 920 575 924 573L929 575L928 570C936 560 929 549 917 550Z" />
          <path d="M896 547Q898 544 900 547M908 547Q910 544 912 547M911 558Q913 555 915 558M921 558Q923 555 925 558" fill="none" />
        </g>
        <path d="M964 548H1070V573H964Z" fill="#e31a1c" />
        <path d="M962 549C985 543 1040 545 1076 544M1076 546V570M961 550L959 574C980 578 1010 574 1070 576" fill="none" stroke="#e84c4c" stroke-width="1.500" />
        <text x="1047" y="568" class="stamp">记</text>
        <text x="938" y="569" class="mark">亦明图记</text>
      </svg>

      <div class="overlay">
        <div class="tree"><span class="plus">+</span>{@render icon('part')}<span>40螺旋手环DHQ&nbsp; (默...</span></div>
        <div class="heads">
          {#each heads as [name, label, arrow]}
            <button aria-label={label}>{@render icon(name)}{#if arrow}<i class="arrow"></i>{/if}</button>
          {/each}
        </div>
        <div class="docctl">
          {#each [['pane', '左窗格'], ['pane', '右窗格'], ['min', '最小化文档'], ['restore', '还原文档'], ['close', '关闭文档']] as [n, l]}
            <button aria-label={l}>{@render icon(n, 12)}</button>
          {/each}
        </div>
      </div>
      <button class="corner yes" aria-label="接受">{@render icon('ok', 20)}</button>
      <button class="corner no" aria-label="放弃">{@render icon('cancel', 20)}</button>
      <nav class="side">
        {#each side as [name, label], i}<button class:on={i === 4} aria-label={label}>{@render icon(name)}</button>{/each}
      </nav>
    </div>
  </main>

  <div class="models">
    <div class="steps">{#each ['|◂', '◂', '▸', '▸|'] as s}<button>{s}</button>{/each}</div>
    <button class="m on">模型</button><button class="m">运动算例 1</button>
  </div>
  <footer class="status">
    <span class="file">40螺旋手环DHQ</span>
    <span>总长度: 2845.26mm</span><span>欠定义</span><span class="edit">在编辑 3D草图2</span><span>自定义</span>
    <i class="arrow up"></i><b class="qm">?</b>
    {@render icon('tag')}
  </footer>
</div>

<style>
  :global(body) { margin: 0; }
  .app {
    display: flex; flex-direction: column; min-height: 100vh; box-sizing: border-box;
    font: 11px/14px "Noto Sans", "Noto Sans CJK SC", sans-serif; color: #26262c; background: #dcdde4;
    overflow: hidden; white-space: nowrap;
  }
  button { font: inherit; color: inherit; background: none; border: 0; padding: 0; margin: 0; display: flex; align-items: center; flex: none; }
  input { font: inherit; margin: 0; box-sizing: border-box; }
  small { font-size: 10px; }
  .icon { flex: none; display: block; }
  .arrow { width: 0; height: 0; border: 2px solid transparent; border-top: 3px solid #333; border-bottom: 0; flex: none; }
  .arrow.dim { border-top-color: #aaa; }
  .arrow.up { border-top: 0; border-bottom: 3px solid #333; }
  .dim { color: #88888e; }
  .dim .arrow { border-top-color: #aaa; }

  .titlebar { display: flex; align-items: stretch; height: 23px; box-sizing: border-box; border-top: 1px solid #26202c; border-bottom: 1px solid #4d4d52; background: #d6d6dc; }
  .brand { display: flex; flex: none; align-items: center; gap: 4px; width: 103px; box-sizing: border-box; padding-left: 3px; border-left: 4px solid #d92c21; background: linear-gradient(#44484c, #2d3034); color: #fff; }
  .brand b { font: 800 10px/20px "Open Sans", sans-serif; }
  .brand em { font-weight: 400; }
  .menus { display: flex; flex: none; align-items: center; gap: 12px; padding: 0 5px 0 15px; background: linear-gradient(#b5b5b9, #a5a5a9); }
  .quick { display: flex; flex: none; align-items: center; gap: 4px; padding: 0 8px 0 4px; }
  .quick button { gap: 6px; }
  .doc { align-self: center; flex: 1; padding-left: 2px; }
  .search { display: flex; align-items: center; gap: 4px; flex: none; width: 160px; box-sizing: border-box; margin: 1px 0; padding: 0 4px; border: 1px solid #444; background: #e9e9ee; }
  .search input { flex: 1; min-width: 0; border: 0; padding: 0; background: none; font-size: 8px; }
  .search input::placeholder { color: #55555a; }
  .winctl { display: flex; flex: none; align-items: center; gap: 4px; padding: 0 2px 0 5px; }
  .winctl button { gap: 5px; }
  .winctl button:first-child { padding-right: 3px; }

  .ribbon { display: flex; align-items: stretch; height: 60px; padding: 2px 4px; box-sizing: border-box; background: linear-gradient(#dddee4, #d5d6df); border-bottom: 1px solid #77777c; }
  .big { flex-direction: column; width: 41px; padding: 2px 0 3px; box-sizing: border-box; }
  .big .cap { line-height: 12px; }
  .big .arrow { margin-top: auto; }
  .big.tall { padding-top: 6px; }
  .big.tall .cap { white-space: normal; width: 33px; text-align: center; line-height: 15px; }
  .big.active { background: linear-gradient(#aeaeb2 42px, #e4e4e8 42px); border: 1px solid #8b8b90; padding: 1px 0 2px; }
  .tools { display: grid; grid-template-columns: repeat(4, 28px); grid-auto-rows: 18px; padding-left: 4px; margin-left: 2px; border-left: 1px solid #77777c; border-right: 1px solid #77777c; }
  .tools button { gap: 5px; }
  .group { display: flex; padding-left: 2px; border-right: 1px solid #85858a; }
  .group .big { width: 42px; }
  .group.first { padding-left: 9px; }
  .group.first .big { width: 41px; }
  .group:last-child { border: 0; }
  .rows { display: grid; grid-template-rows: repeat(3, 18px); width: 113px; padding-left: 2px; }
  .rows button { gap: 4px; }
  .rows .arrow { margin-left: auto; margin-right: 4px; }

  .work { display: grid; grid-template: 16px 1fr / 183px 1fr; flex: 1; min-height: 496px; }
  .tabs { grid-area: 1 / 1 / 2 / 3; justify-self: start; display: flex; z-index: 2; background: #dcdde4; }
  .tabs button { height: 16px; min-width: 44px; padding: 0 8px; justify-content: center; border: solid #55555a; border-width: 1px 1px 1px 0; background: linear-gradient(#b9b9bd, #a6a6aa); }
  .tabs button.long { padding: 0 6px; }
  .tabs button.on { background: #dddee4; border-bottom-color: #dddee4; border-top-color: #dddee4; }
  .panel { grid-area: 2 / 1; position: relative; border-right: 2px solid #55555e; padding: 6px 4px 0 1px; background: linear-gradient(90deg, #dadbe3, #dedfe6); box-shadow: inset 0 1px #8f8f98; }
  .managers { display: flex; border-bottom: 1px solid #66666c; margin: 0 -4px 4px -1px; }
  .managers button { width: 22px; height: 18px; justify-content: center; border: 1px solid #66666c; border-left: 0; border-bottom: 0; background: #aaaaaf; box-sizing: border-box; }
  .managers .on { background: #dfe0e6; }
  h1 { display: flex; align-items: center; gap: 2px; margin: 0 0 0 1px; height: 19px; box-sizing: border-box; border: 1px solid #66666c; background: #a6a7ab; font-size: 12px; font-weight: 500; padding: 0 3px 0 1px; }
  h1 span { flex: 1; }
  .q { color: #e8e8ec; font-weight: 700; }
  .confirm { display: flex; align-items: center; gap: 8px; height: 18px; padding: 2px 0 0 2px; margin-bottom: 7px; }
  .box { border: 1px solid #45454b; margin: 0 0 6px 1px; }
  h2 { display: flex; justify-content: space-between; align-items: center; margin: 0; height: 17px; line-height: 16px; font-size: 12px; font-weight: 500; padding: 0 4px 0 3px; background: #a4a5a9; border-bottom: 1px solid #66666c; }
  h2 small { font-size: 11px; }
  .fold { flex: none; }
  .opt { display: flex; align-items: center; gap: 3px; height: 22px; font-size: 12px; }
  .opt input { appearance: none; width: 12px; height: 12px; border: 1px solid #9a9aa2; background: linear-gradient(135deg, #d5d5da, #f8f8fa); display: grid; place-items: center; flex: none; }
  .opt input[type='radio'] { border-radius: 50%; }
  .opt input[type='radio']:checked::before { content: ''; width: 6px; height: 6px; border-radius: 50%; background: radial-gradient(circle at 35% 35%, #6fd0ee, #123c63 70%); }
  .opt input[type='checkbox']:checked::before { content: ''; width: 3px; height: 6px; border: solid #33479c; border-width: 0 2px 2px 0; transform: rotate(40deg); margin-bottom: 2px; }
  .params { padding: 0 0 5px 19px; }
  .params .opt:nth-child(-n + 2) { height: 20px; }
  .push { width: 90px; height: 22px; justify-content: center; margin: 5px 0 0 27px; border: 1px solid #8a8a90; background: linear-gradient(#f7f7f9, #d5d5da); border-radius: 1px; font-size: 12px; }
  .tol { display: flex; gap: 8px; padding: 3px 8px 5px 5px; height: 58px; }
  .tol > svg { margin-top: 2px; flex: none; }
  .xxx { font: 7px "Liberation Sans", sans-serif; fill: #2f6fc0; }
  .pm { font: bold 6px "Liberation Sans", sans-serif; fill: #222; }
  .fields { flex: 1; }
  .spin { display: flex; height: 18px; background: #fff; margin-top: 1px; }
  .entry { flex: 1; }
  .entry input { border: 0; padding: 0 1px; height: 16px; width: 46px; margin: 1px; background: #3a8fe0; color: #fff; }
  .updown { display: grid; width: 13px; }
  .updown button { height: 9px; justify-content: center; border: 1px solid #b5b5bb; background: #eee; }
  .wheel { height: 7px; border-radius: 1px; background: repeating-linear-gradient(90deg, transparent 0 3px, #77777c 3px 4px), linear-gradient(90deg, #77777c, #fff 25% 65%, #77777c); border-bottom: 1px solid #77777c; box-sizing: border-box; }
  .actual { width: 118px; height: 24px; margin-top: 8px; border: 1px solid #a8a8ae; border-radius: 2px; background: #d8d9df; color: #88888e; padding: 0 2px; }
  .preview { padding: 0 0 1px 33px; }
  .grip { position: absolute; right: -7px; top: 218px; width: 7px; height: 30px; border: solid #55555e; border-width: 1px 1px 1px 0; background: #dcdde4; box-sizing: border-box; flex-direction: column; justify-content: space-around; z-index: 2; }
  .grip i { border: 2px solid transparent; border-right: 3px solid #222; border-left: 0; }

  .view { grid-area: 1 / 2 / 3 / 3; position: relative; display: grid; min-width: 0; overflow: hidden; }
  .scene { grid-area: 1 / 1; width: 100%; height: 100%; min-height: 0; }
  .comb { fill: none; stroke: #dfe07a; stroke-width: 1; opacity: .75; }
  .faint { stroke: #f0f36e; }
  .curve { fill: none; stroke: #4f97e4; stroke-width: 2.8; stroke-linejoin: round; }
  .marks { fill: none; stroke: #dc86c4; stroke-width: 1.6; stroke-dasharray: 3 4; }
  .link { fill: none; stroke: #f07ba6; stroke-width: 2.2; stroke-linejoin: round; }
  .dimtext { font: 17px "Liberation Serif", serif; fill: #77777c; opacity: .85; }
  .ax { font: 9px "Liberation Serif", serif; }
  .iso { font: 500 14px "Noto Sans CJK SC", sans-serif; fill: #111; }
  .seal text { font: 700 25px "Noto Sans CJK SC", sans-serif; fill: #fff; }
  .stamp { font: 900 22px "Noto Sans CJK SC", sans-serif; fill: #fff; }
  .mark { font: 400 27px "Noto Sans CJK SC", sans-serif; fill: #fff; stroke: #55555a; stroke-width: 1.6; paint-order: stroke; }
  .overlay { grid-area: 1 / 1; align-self: start; display: flex; align-items: flex-start; z-index: 1; padding: 6px 9px 0 0; }
  .tree { display: flex; align-items: center; gap: 3px; padding-top: 12px; font-size: 12px; width: 328px; }
  .plus { width: 7px; height: 7px; border: 1px solid #777; font-size: 8px; line-height: 7px; text-align: center; }
  .heads { display: flex; gap: 5px; padding-top: 15px; flex: 1; }
  .heads button { gap: 5px; opacity: .85; }
  .docctl { display: flex; gap: 6px; opacity: .75; }
  .corner { position: absolute; opacity: .35; }
  .yes { right: 60px; top: 43px; }
  .no { right: 34px; top: 66px; }
  .side { position: absolute; right: 0; top: 47px; }
  .side button { width: 19px; height: 19px; justify-content: center; border: 1px solid #55555a; border-right: 0; border-top-width: 0; background: #a5a5aa; box-sizing: border-box; }
  .side .on { background: #e8e8ee; }

  .models { display: flex; height: 12px; border-top: 1px solid #33333a; border-bottom: 1px solid #55555a; background: #e2e3e6; box-sizing: border-box; line-height: 10px; }
  .steps { display: flex; padding-left: 2px; width: 52px; box-sizing: border-box; }
  .steps button { flex: 1; justify-content: center; font-size: 7px; color: #77777c; background: #bcbcc0; border-right: 1px solid #99999e; }
  .m { padding: 0 6px 0 5px; font-size: 11px; background: #a9a9ad; border: solid #33333a; border-width: 0 1px 1px 0; }
  .m.on { background: #e2e3e6; border-bottom: 0; padding: 0 8px; }
  .status { display: flex; align-items: center; gap: 12px; height: 16px; padding: 0 4px 0 1px; font-size: 10px; border-bottom: 1px solid #77777c; box-sizing: border-box; background: #d3d6db; }
  .file { flex: 1; font-size: 10px; }
  .edit { padding-right: 32px; }
  .qm { width: 10px; height: 10px; border: 1px solid #5a8f70; background: #e6f5e8; color: #1c8a36; line-height: 10px; text-align: center; margin-right: 28px; }
</style>
